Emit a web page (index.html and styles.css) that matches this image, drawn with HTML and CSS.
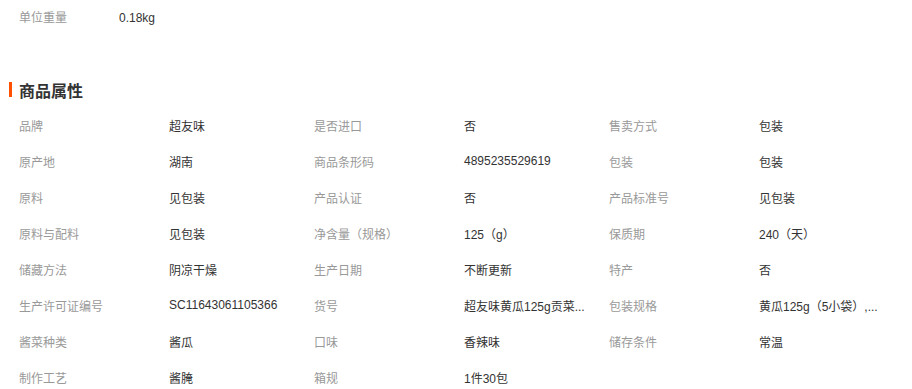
FILE: index.html
```html
<!DOCTYPE html>
<html lang="zh-CN">
<head>
<meta charset="utf-8">
<title>商品属性</title>
<link rel="stylesheet" href="styles.css">
</head>
<body>
<div class="page">
  <div class="top-row">
    <span class="label top-label">单位重量</span>
    <span class="value">0.18kg</span>
  </div>

  <h2 class="section-title"><span class="bar"></span>商品属性</h2>

  <div class="attrs">
    <span class="label">品牌</span><span class="value">超友味</span>
    <span class="label">是否进口</span><span class="value">否</span>
    <span class="label">售卖方式</span><span class="value">包装</span>

    <span class="label">原产地</span><span class="value">湖南</span>
    <span class="label">商品条形码</span><span class="value">4895235529619</span>
    <span class="label">包装</span><span class="value">包装</span>

    <span class="label">原料</span><span class="value">见包装</span>
    <span class="label">产品认证</span><span class="value">否</span>
    <span class="label">产品标准号</span><span class="value">见包装</span>

    <span class="label">原料与配料</span><span class="value">见包装</span>
    <span class="label">净含量（规格）</span><span class="value">125（g）</span>
    <span class="label">保质期</span><span class="value">240（天）</span>

    <span class="label">储藏方法</span><span class="value">阴凉干燥</span>
    <span class="label">生产日期</span><span class="value">不断更新</span>
    <span class="label">特产</span><span class="value">否</span>

    <span class="label">生产许可证编号</span><span class="value">SC11643061105366</span>
    <span class="label">货号</span><span class="value">超友味黄瓜125g贡菜...</span>
    <span class="label">包装规格</span><span class="value">黄瓜125g（5小袋）,...</span>

    <span class="label">酱菜种类</span><span class="value">酱瓜</span>
    <span class="label">口味</span><span class="value">香辣味</span>
    <span class="label">储存条件</span><span class="value">常温</span>

    <span class="label">制作工艺</span><span class="value">酱腌</span>
    <span class="label">箱规</span><span class="value">1件30包</span>
  </div>
</div>
</body>
</html>
```

FILE: styles.css
```css
html, body {
  margin: 0;
  padding: 0;
  background: #fff;
}

body {
  font-family: "Liberation Sans", "Noto Sans CJK SC", sans-serif;
  font-size: 12px;
  color: #333;
}

.page {
  width: 912px;
}

.top-row {
  display: flex;
  height: 36px;
  line-height: 36px;
  padding-left: 19px;
}

.top-label {
  width: 100px;
}

.label {
  color: #999;
}

.value {
  color: #333;
}

.section-title {
  display: flex;
  align-items: center;
  gap: 7px;
  margin: 36px 0 0 9px;
  height: 35px;
  font-size: 16px;
  font-weight: bold;
  color: #333;
}

.bar {
  width: 3px;
  height: 15px;
  background: #ff5000;
}

.attrs {
  display: grid;
  grid-template-columns: 150px 145px 150px 145px 150px 145px;
  grid-auto-rows: 36px;
  align-items: center;
  padding-left: 19px;
}

.attrs span {
  white-space: nowrap;
}
```
